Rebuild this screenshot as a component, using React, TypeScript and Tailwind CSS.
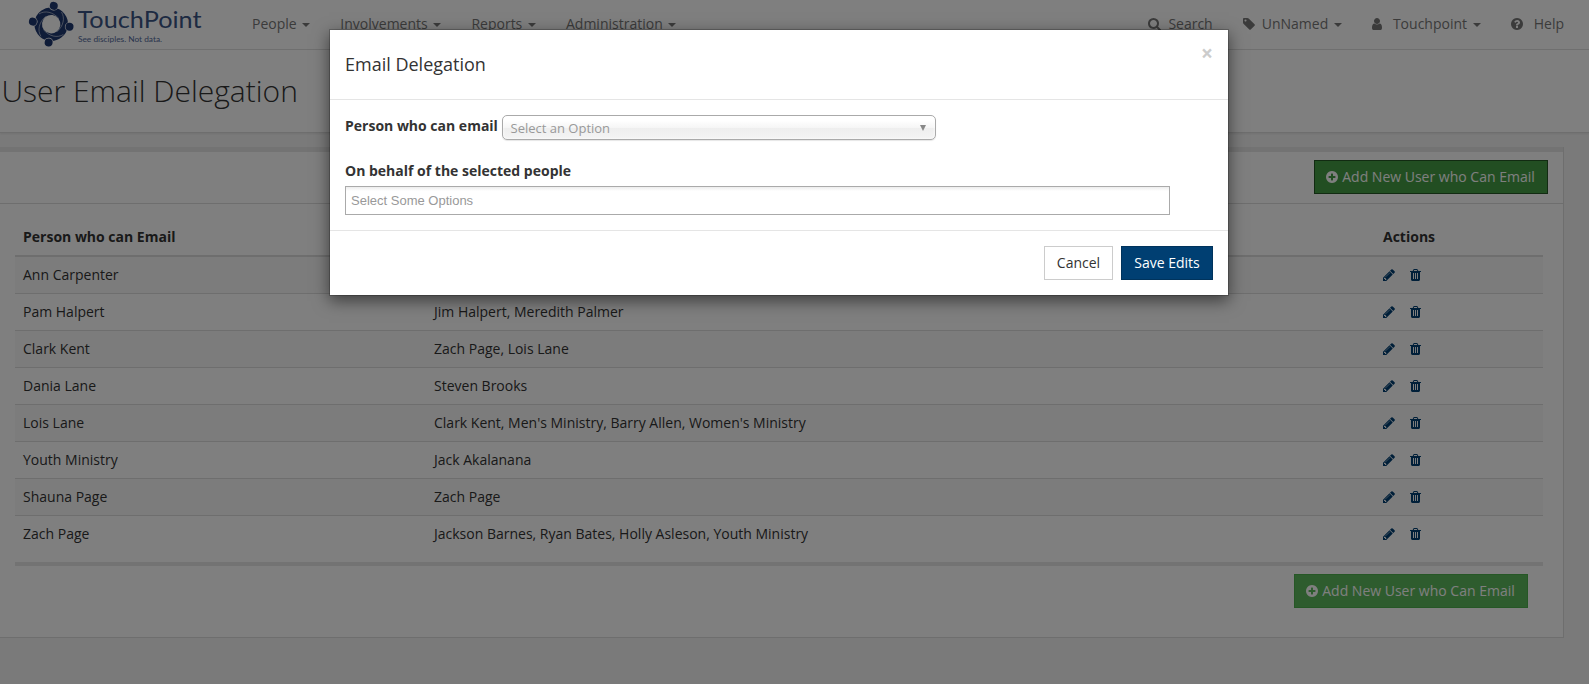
import { ReactNode } from "react"

interface Delegation {
  person: string
  onBehalfOf: string
}

const delegations: Delegation[] = [
  { person: "Ann Carpenter", onBehalfOf: "" },
  { person: "Pam Halpert", onBehalfOf: "Jim Halpert, Meredith Palmer" },
  { person: "Clark Kent", onBehalfOf: "Zach Page, Lois Lane" },
  { person: "Dania Lane", onBehalfOf: "Steven Brooks" },
  { person: "Lois Lane", onBehalfOf: "Clark Kent, Men's Ministry, Barry Allen, Women's Ministry" },
  { person: "Youth Ministry", onBehalfOf: "Jack Akalanana" },
  { person: "Shauna Page", onBehalfOf: "Zach Page" },
  { person: "Zach Page", onBehalfOf: "Jackson Barnes, Ryan Bates, Holly Asleson, Youth Ministry" },
]

const CIRCLE =
  "m320-64q0 209-103 385.5t-279.5 279.5-385.5 103-385.5-103-279.5-279.5-103-385.5 103-385.5 279.5-279.5 385.5-103 385.5 103 279.5 279.5 103 385.5z"

// 1792 unit em square, x offset and width of each glyph
const icons = {
  search: {
    box: "64 0 1664 1792",
    path: "M1216 832q0-185-131.5-316.5t-316.5-131.5-316.5 131.5-131.5 316.5 131.5 316.5 316.5 131.5 316.5-131.5 131.5-316.5zm512 832q0 52-38 90t-90 38q-54 0-90-38l-343-342q-179 124-399 124-143 0-273.5-55.5t-225-150-150-225-55.5-273.5 55.5-273.5 150-225 225-150 273.5-55.5 273.5 55.5 225 150 150 225 55.5 273.5q0 220-124 399l343 343q37 37 37 90z",
  },
  tag: {
    box: "128 0 1536 1792",
    path: "M576 448q0-53-37.5-90.5t-90.5-37.5-90.5 37.5-37.5 90.5 37.5 90.5 90.5 37.5 90.5-37.5 37.5-90.5zm1067 576q0 53-37 90l-491 492q-39 37-91 37-53 0-90-37l-715-716q-38-37-64.5-101t-26.5-117v-416q0-52 38-90t90-38h416q53 0 117 26.5t102 64.5l715 714q37 39 37 91z",
  },
  user: {
    box: "256 0 1280 1792",
    path: "M1536 1399q0 109-62.5 187t-150.5 78h-854q-88 0-150.5-78t-62.5-187q0-85 8.5-160.5t31.5-152 58.5-131 94-89 134.5-34.5q131 128 313 128t313-128q76 0 134.5 34.5t94 89 58.5 131 31.5 152 8.5 160.5zm-256-887q0 159-112.5 271.5t-271.5 112.5-271.5-112.5-112.5-271.5 112.5-271.5 271.5-112.5 271.5 112.5 112.5 271.5z",
  },
  help: {
    box: "128 0 1536 1792",
    path: "M1024 1376v-192q0-14-9-23t-23-9h-192q-14 0-23 9t-9 23v192q0 14 9 23t23 9h192q14 0 23-9t9-23zm256-672q0-88-55.5-163t-138.5-116-170-41q-243 0-371 213-15 24 8 42l132 100q7 6 19 6 16 0 25-12 53-68 86-92 34-24 86-24 48 0 85.5 26t37.5 59q0 38-20 61t-68 45q-63 28-115.5 86.5t-52.5 125.5v36q0 14 9 23t23 9h192q14 0 23-9t9-23q0-19 21.5-49.5t54.5-49.5q32-18 49-28.5t46-35 44.5-48 28-60.5 12.5-81zm384 192q0 209-103 385.5t-279.5 279.5-385.5 103-385.5-103-279.5-279.5-103-385.5 103-385.5 279.5-279.5 385.5-103 385.5 103 279.5 279.5 103 385.5z",
  },
  plus: {
    box: "128 0 1536 1792",
    path:
      "M1344 960v-128q0-26-19-45t-45-19h-256v-256q0-26-19-45t-45-19h-128q-26 0-45 19t-19 45v256h-256q-26 0-45 19t-19 45v128q0 26 19 45t45 19h256v256q0 26 19 45t45 19h128q26 0 45-19t19-45v-256h256q26 0 45-19t19-45z" +
      CIRCLE,
  },
  pencil: {
    box: "128 0 1536 1792",
    path: "M491 1536l91-91-235-235-91 91v107h128v128h107zm523-928q0-22-22-22-10 0-17 7l-542 542q-7 7-7 17 0 22 22 22 10 0 17-7l542-542q7-7 7-17zm-54-192l416 416-832 832h-416v-416zm683 96q0 53-37 90l-166 166-416-416 166-165q36-38 90-38 53 0 91 38l235 234q37 39 37 91z",
  },
  trash: {
    box: "192 0 1408 1792",
    path: "M704 1376v-704q0-14-9-23t-23-9h-64q-14 0-23 9t-9 23v704q0 14 9 23t23 9h64q14 0 23-9t9-23zm256 0v-704q0-14-9-23t-23-9h-64q-14 0-23 9t-9 23v704q0 14 9 23t23 9h64q14 0 23-9t9-23zm256 0v-704q0-14-9-23t-23-9h-64q-14 0-23 9t-9 23v704q0 14 9 23t23 9h64q14 0 23-9t9-23zm-544-992h448l-48-117q-7-9-17-11h-317q-10 2-17 11zm928 32v64q0 14-9 23t-23 9h-96v948q0 83-47 143.5t-113 60.5h-832q-66 0-113-58.5t-47-141.5v-952h-96q-14 0-23-9t-9-23v-64q0-14 9-23t23-9h309l70-167q15-37 54-63t79-26h320q40 0 79 26t54 63l70 167h309q14 0 23 9t9 23z",
  },
}

function Icon({ name, className = "" }: { name: keyof typeof icons; className?: string }) {
  return (
    <svg viewBox={icons[name].box} fill="currentColor" className={`h-3.5 w-auto shrink-0 ${className}`}>
      <path d={icons[name].path} />
    </svg>
  )
}

function Caret() {
  return <span className="ml-[5.7px] mt-[3px] border-x-4 border-t-4 border-x-transparent border-t-current" />
}

function NavItem({ children, caret }: { children: ReactNode; caret?: boolean }) {
  return (
    <a className="flex items-center px-[15px]">
      {children}
      {caret && <Caret />}
    </a>
  )
}

function Logo() {
  return (
    <svg viewBox="0 0 176 48" className="ml-[28px] h-12 w-[176px] shrink-0">
      <g transform="translate(23.2 24.2) rotate(8)">
        <circle r="13" fill="none" stroke="#1e3870" strokeWidth="7.6" />
        {/* four people holding hands around the ring */}
        {[0, 90, 180, 270].map((angle) => (
          <g key={angle} transform={`rotate(${angle})`}>
            <path d="M-13.500 -8.500C-8 -13 0 -12.500 7 -6.500" fill="none" stroke="#fff" strokeOpacity="0.7" strokeWidth="0.7" />
            <circle cx="0" cy="-18.700" r="4.900" fill="#fff" />
            <circle cx="0" cy="-18.500" r="4" fill="#1e3870" />
          </g>
        ))}
      </g>
      <text x="49.500" y="27.700" textLength="124" lengthAdjust="spacingAndGlyphs" fontSize="22.500" fill="#3a5485" className="font-['Lato',sans-serif]">
        TouchPoint
      </text>
      <text x="50" y="41.500" textLength="84" lengthAdjust="spacingAndGlyphs" fontSize="7.800" fill="#52699a" className="font-['Lato',sans-serif]">
        See disciples. Not data.
      </text>
    </svg>
  )
}

function Navbar() {
  return (
    <nav className="flex h-[50px] items-stretch border-b border-[#e0e0e0] bg-white text-[#777]">
      <Logo />
      <div className="ml-[33px] flex pb-[2px]">
        <NavItem caret>People</NavItem>
        <NavItem caret>Involvements</NavItem>
        <NavItem caret>Reports</NavItem>
        <NavItem caret>Administration</NavItem>
      </div>
      <div className="ml-auto flex pb-[2px] pr-[10px]">
        <NavItem>
          <Icon name="search" className="mr-[7.5px]" />
          Search
        </NavItem>
        <NavItem caret>
          <Icon name="tag" className="mr-[7px]" />
          UnNamed
        </NavItem>
        <NavItem caret>
          <Icon name="user" className="mr-[11px]" />
          Touchpoint
        </NavItem>
        <NavItem>
          <Icon name="help" className="mr-[11px]" />
          Help
        </NavItem>
      </div>
    </nav>
  )
}

function AddButton({ active }: { active?: boolean }) {
  return (
    <button
      className={`flex h-[34px] w-[234px] items-center justify-center gap-1 border pr-px text-white ${
        active ? "border-[#255625] bg-[#449d44]" : "border-[#4cae4c] bg-[#5cb85c]"
      }`}
    >
      <Icon name="plus" />
      Add New User who Can Email
    </button>
  )
}

function DelegationTable() {
  return (
    <table className="w-full table-fixed border-separate border-spacing-0 text-left">
      <thead>
        <tr>
          <th className="h-[38px] w-[411px] border-b-2 border-[#ddd] px-2 font-bold">Person who can Email</th>
          <th className="w-[949px] border-b-2 border-[#ddd] px-2" />
          <th className="border-b-2 border-[#ddd] px-2 font-bold">Actions</th>
        </tr>
      </thead>
      <tbody>
        {delegations.map((row) => (
          <tr key={row.person} className="group odd:bg-[#f9f9f9]">
            <td className="h-[37px] border-b border-[#ddd] px-2 group-last:border-transparent">{row.person}</td>
            <td className="border-b border-[#ddd] px-2 group-last:border-transparent">{row.onBehalfOf}</td>
            <td className="border-b border-[#ddd] px-2 text-[#003f72] group-last:border-transparent">
              <div className="flex items-center gap-[14.5px]">
                <Icon name="pencil" />
                <Icon name="trash" />
              </div>
            </td>
          </tr>
        ))}
      </tbody>
    </table>
  )
}

function DelegationModal() {
  return (
    <div className="flex h-[267px] w-[900px] flex-col border border-black/20 bg-white bg-clip-padding shadow-[0_5px_15px_rgba(0,0,0,0.5)]">
      <div className="flex h-[70px] items-center justify-between border-b border-[#e5e5e5] px-[15px]">
        <h4 className="-mt-0.5 text-lg">Email Delegation</h4>
        <button className="-mt-[22px] text-[21px] font-bold leading-none text-[#ccc]">×</button>
      </div>

      <div className="h-[131px] border-b border-[#e5e5e5] px-[15px] pt-[15px]">
        <div className="flex h-[25px] items-center gap-1">
          <label className="-mt-1 w-[153px] whitespace-nowrap font-bold">Person who can email</label>
          <div className="flex h-[25px] w-[434px] items-center justify-between rounded-[5px] border border-[#aaa] bg-[linear-gradient(#fff_20%,#f6f6f6_50%,#eee_52%,#f4f4f4_100%)] pl-[7.5px] pr-[9px] text-[13px] text-[#999] shadow-[0_0_3px_white_inset,0_1px_1px_rgba(0,0,0,0.1)]">
            <span className="pt-0.5">Select an Option</span>
            <span className="border-x-[3.5px] border-t-[6px] border-x-transparent border-t-[#888]" />
          </div>
        </div>
        <label className="mt-[21px] block font-bold leading-5">On behalf of the selected people</label>
        <div className="mt-[5px] flex h-[29px] w-[825px] items-center border border-[#aaa] bg-[linear-gradient(#eee_1%,#fff_15%)] px-[5px] pt-0.5 font-['Liberation_Sans',Arial,sans-serif] text-[13px] text-[#999]">
          Select Some Options
        </div>
      </div>

      <div className="flex justify-end gap-2 p-[15px]">
        <button className="h-[34px] w-[69px] border border-[#ccc] bg-white">Cancel</button>
        <button className="h-[34px] w-[92px] border border-[#00335c] bg-[#003f72] text-white">Save Edits</button>
      </div>
    </div>
  )
}

export default function App() {
  return (
    <div className="relative h-[684px] overflow-hidden bg-[#f5f5f5] font-['Open_Sans',sans-serif] text-sm text-[#333]">
      <Navbar />

      <header className="flex h-[83px] items-center border-b border-[#ddd] bg-white pl-[1.5px] shadow-[0_1px_2px_rgba(0,0,0,0.08)]">
        <h2 className="text-[30px] font-light">User Email Delegation</h2>
      </header>

      <main className="mr-[25px] mt-[14px] h-[491px] border-b border-r border-[#ddd] bg-white">
        <div className="flex h-[57px] items-start justify-end border-b border-t-[5px] border-b-[#ddd] border-t-[#e7e7e7] pr-[15px] pt-2">
          <AddButton active />
        </div>
        <div className="pl-[15px] pr-5 pt-[15px]">
          <DelegationTable />
          <div className="mt-[9px] flex justify-end border-t-4 border-[#e7e7e7] pr-[15px] pt-2">
            <AddButton />
          </div>
        </div>
      </main>

      <div className="absolute inset-0 flex items-start bg-black/50 pl-[329px] pt-[29px]">
        <DelegationModal />
      </div>
    </div>
  )
}
